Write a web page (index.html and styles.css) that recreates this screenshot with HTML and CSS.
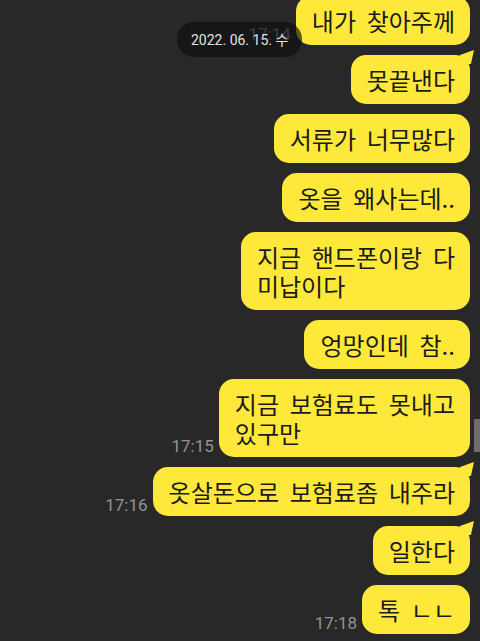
FILE: index.html
```html
<!DOCTYPE html>
<html lang="ko">
<head>
<meta charset="utf-8">
<link rel="stylesheet" href="styles.css">
</head>
<body>
<div class="chat">
  <div class="row first"><span class="time">17:14</span><div class="bubble">내가 찾아주께</div></div>
  <div class="row"><div class="bubble tail">못끝낸다</div></div>
  <div class="row"><div class="bubble">서류가 너무많다</div></div>
  <div class="row"><div class="bubble">옷을 왜사는데..</div></div>
  <div class="row"><div class="bubble">지금 핸드폰이랑 다<br>미납이다</div></div>
  <div class="row"><div class="bubble">엉망인데 참..</div></div>
  <div class="row"><span class="time">17:15</span><div class="bubble">지금 보험료도 못내고<br>있구만</div></div>
  <div class="row"><span class="time">17:16</span><div class="bubble tail">옷살돈으로 보험료좀 내주라</div></div>
  <div class="row"><div class="bubble tail">일한다</div></div>
  <div class="row"><span class="time">17:18</span><div class="bubble">톡 ㄴㄴ</div></div>
</div>
<div class="date-pill">2022. 06. 15. 수</div>
<div class="scrollbar"></div>
</body>
</html>
```
FILE: styles.css
```css
html, body {
  margin: 0;
  padding: 0;
  background: #282828;
  width: 480px;
  height: 641px;
  overflow: hidden;
  position: relative;
}
.chat {
  display: flex;
  flex-direction: column;
  align-items: flex-end;
  gap: 10px;
  padding-right: 10px;
  margin-top: -4px;
}
.row {
  display: flex;
  align-items: flex-end;
  gap: 5px;
}
.bubble {
  position: relative;
  background: #fee83a;
  color: #1b1b1b;
  font-family: "Noto Sans CJK KR", "Noto Sans", sans-serif;
  font-size: 24px;
  line-height: 29px;
  word-spacing: 4px;
  padding: 10px 15px 10px 16px;
  border-radius: 15px;
  white-space: nowrap;
}
.bubble.tail::after {
  content: "";
  position: absolute;
  top: -5px;
  right: -4px;
  width: 14px;
  height: 14px;
  background: #fee83a;
  clip-path: polygon(0 36%, 100% 0, 78% 100%, 0 100%);
}
.time {
  font-family: Roboto, "Noto Sans", sans-serif;
  font-size: 17px;
  color: #939393;
  line-height: 17px;
  margin-bottom: 2px;
}
.date-pill {
  position: absolute;
  left: 177px;
  top: 22px;
  height: 35px;
  padding: 0 14px;
  border-radius: 17px;
  background: rgba(14, 14, 14, 0.66);
  color: #e2e2e2;
  font-family: Roboto, "Noto Sans CJK KR", sans-serif;
  font-size: 14px;
  line-height: 37px;
}
.scrollbar {
  position: absolute;
  right: 0;
  top: 419px;
  width: 6px;
  height: 33px;
  background: #6e6e6e;
}
```
